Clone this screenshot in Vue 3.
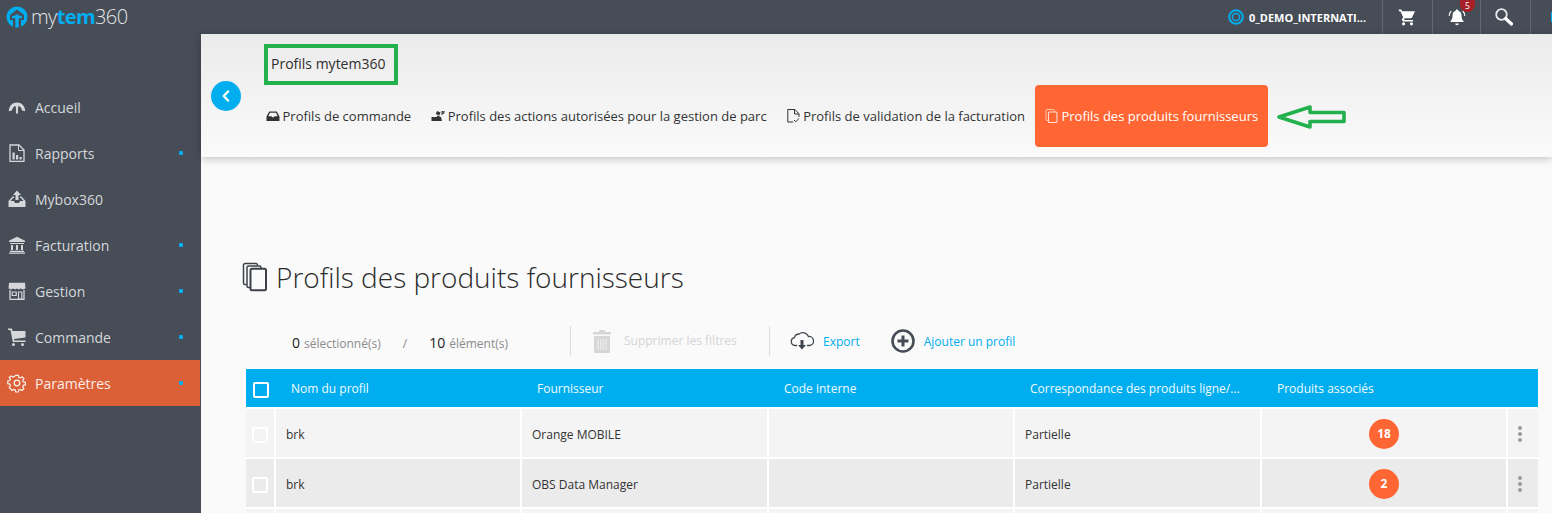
<template>
  <div class="app">
    <header class="topbar">
      <div class="logo">
        <svg class="logo-mark" width="22" height="22" viewBox="0 0 22 22">
          <circle cx="11" cy="11" r="10.500" fill="#00aeef" />
          <path d="M11 3.500L18 9v5h-3v7.500H7V14H4V9z" fill="#464d57" />
          <path d="M9.300 8.500h3.400v13h-3.400zM6 9.800h10v2.400H6z" fill="#00aeef" />
        </svg>
        <span class="logo-text">my<b>tem</b>360</span>
      </div>
      <div class="top-right">
        <div class="account">
          <svg width="16" height="16" viewBox="0 0 16 16">
            <circle cx="8" cy="8" r="6.800" fill="none" stroke="#00aeef" stroke-width="2" />
            <circle cx="8" cy="8" r="3.600" fill="none" stroke="#00aeef" stroke-width="1.500" />
          </svg>
          <span>0_DEMO_INTERNATI...</span>
        </div>
        <div class="top-btn cart">
          <svg width="19" height="19" viewBox="0 0 24 24" fill="#fff">
            <path d="M7 18a2 2 0 1 0 0 4 2 2 0 0 0 0-4zm10 0a2 2 0 1 0 0 4 2 2 0 0 0 0-4zM1 2v2h2l3.600 7.600-1.400 2.400c-.7 1.300.3 3 1.800 3h12v-2H7.400l1.100-2h7.500c.7 0 1.400-.4 1.700-1L21.500 4H5.200l-.9-2H1z" />
          </svg>
        </div>
        <div class="top-btn bell">
          <svg width="18" height="18" viewBox="0 0 18 18" fill="#fff">
            <path d="M9 1.500c.8 0 1.300.5 1.300 1.200 2.300.6 3.200 2.500 3.200 5 0 3 .8 4.200 2 5.300v1H2.500v-1c1.200-1.100 2-2.300 2-5.300 0-2.500.9-4.400 3.200-5 0-.7.500-1.200 1.300-1.200zM7.200 15.500h3.600c0 1-.8 1.700-1.800 1.700s-1.800-.7-1.800-1.700z" />
            <path d="M3.200 3C1.800 4.500 1.200 6 1.200 8M14.800 3c1.400 1.500 2 3 2 5" fill="none" stroke="#fff" stroke-width="1.100" />
          </svg>
          <span class="bell-count">5</span>
        </div>
        <div class="top-btn search">
          <svg width="20" height="20" viewBox="0 0 20 20">
            <circle cx="7.500" cy="7.500" r="5.300" fill="none" stroke="#e8e8e8" stroke-width="1.800" />
            <path d="M11.500 11.500l6 5.500" stroke="#fff" stroke-width="3.200" stroke-linecap="round" />
          </svg>
        </div>
        <div class="top-btn last"><i class="edge-mark"></i></div>
      </div>
    </header>

    <div class="layout">
      <nav class="sidebar">
        <a v-for="item in menu" :key="item.label" class="nav-item" :class="{ active: item.active }">
          <svg class="nav-icon" width="18" height="18" viewBox="0 0 18 18" v-html="item.icon"></svg>
          <span class="nav-label">{{ item.label }}</span>
          <i v-if="item.dot" class="nav-dot"></i>
        </a>
      </nav>

      <main class="main">
        <section class="subheader">
          <button class="back" type="button">
            <svg width="10" height="12" viewBox="0 0 10 12">
              <path d="M7 1.500L2.800 6 7 10.500" fill="none" stroke="#fff" stroke-width="2.400" stroke-linecap="round" stroke-linejoin="round" />
            </svg>
          </button>
          <div class="sub-col">
            <h2 class="sub-title">Profils mytem360</h2>
            <div class="tabs">
              <a v-for="tab in tabs" :key="tab.label" class="tab" :class="{ active: tab.active }">
                <svg width="14" height="14" viewBox="0 0 14 14" v-html="tab.icon"></svg>
                <span>{{ tab.label }}</span>
              </a>
            </div>
          </div>
          <i class="mark-box"></i>
          <svg class="mark-arrow" width="72" height="27" viewBox="0 0 72 27">
            <path d="M3 13L34 3v5.500h34v9H34V23z" fill="none" stroke="#22b14c" stroke-width="3.600" stroke-linejoin="round" />
          </svg>
        </section>

        <section class="content">
          <h1 class="page-title">
            <svg width="26" height="30" viewBox="0 0 26 30" fill="none" stroke="#3c4248" stroke-width="1.500">
              <rect x="8.500" y="6.750" width="15.500" height="21.500" rx="1.500" stroke-width="2" />
              <path d="M8 25.500H6.500A1.500 1.500 0 0 1 5 24V5.500A1.500 1.500 0 0 1 6.500 4H17.500a1.500 1.500 0 0 1 1.500 1.500V6.500" />
              <path d="M4.500 22.500H3A1.500 1.500 0 0 1 1.500 21V3A1.500 1.500 0 0 1 3 1.500H14a1.500 1.500 0 0 1 1.500 1.500V3.500" />
            </svg>
            <span>Profils des produits fournisseurs</span>
          </h1>

          <div class="toolbar">
            <div class="counts">
              <b>0</b><span class="count-label">sélectionné(s)</span>
              <span class="count-sep">/</span>
              <b>10</b><span class="count-label">élément(s)</span>
            </div>
            <div class="tool clear">
              <svg width="18" height="24" viewBox="0 0 18 24" fill="#d6d6d6">
                <path d="M6.500 1h5l.7 2H18v2.500H0V3h5.800zM1 7h16v16a1 1 0 0 1-1 1H2a1 1 0 0 1-1-1z" />
                <path d="M5 10v11M7.700 10v11M10.300 10v11M13 10v11" stroke="#f2f2f2" stroke-width="1" />
              </svg>
              <span>Supprimer les filtres</span>
            </div>
            <div class="tool export">
              <svg width="24" height="20" viewBox="0 0 24 20" fill="none" stroke="#3f464e" stroke-width="1.300">
                <path d="M7 14.500H5a4 4 0 0 1-.6-7.900A5 5 0 0 1 9 3a6 6 0 0 1 9.500 2.500 4.500 4.500 0 0 1 1 9H17" />
                <path d="M10.500 9h3v5H16l-4 4.500L8 14h2.500z" fill="#3f464e" stroke="none" />
              </svg>
              <span>Export</span>
            </div>
            <div class="tool add">
              <svg width="24" height="24" viewBox="0 0 24 24">
                <circle cx="12" cy="12" r="10.500" fill="none" stroke="#464d57" stroke-width="2.600" />
                <path d="M12 6.500v11M6.500 12h11" stroke="#464d57" stroke-width="3" />
              </svg>
              <span>Ajouter un profil</span>
            </div>
          </div>

          <div class="table">
            <div class="thead">
              <div class="th check-cell"><i class="check head"></i></div>
              <div v-for="col in columns" :key="col" class="th">{{ col }}</div>
              <div class="th"></div>
            </div>
            <div v-for="(row, i) in rows" :key="i" class="row">
              <div class="td check-cell"><i v-if="row.name" class="check"></i></div>
              <div class="td">{{ row.name }}</div>
              <div class="td">{{ row.supplier }}</div>
              <div class="td">{{ row.code }}</div>
              <div class="td">{{ row.match }}</div>
              <div class="td center"><span v-if="row.count" class="count">{{ row.count }}</span></div>
              <div class="td"><span v-if="row.name" class="dots"><i></i><i></i><i></i></span></div>
            </div>
          </div>
        </section>
      </main>
    </div>
  </div>
</template>

<script setup>
const stroke = 'fill="none" stroke="currentColor"'

const menu = [
  {
    label: 'Accueil',
    icon: '<path d="M.8 13.200C1 7.800 4.500 4.500 9 4.500s8 3.300 8.200 8.700l-3.200-.7C13.600 10 12.300 8.600 10.300 8.100L9.900 12.500a1.200 1.200 0 1 1-1.800 0L7.700 8.100C5.700 8.600 4.400 10 4 12.500z" fill="currentColor"/><path d="M8 13h2v2.400H8z" fill="currentColor"/>',
  },
  {
    label: 'Rapports',
    dot: true,
    icon: `<path d="M2 1h9l5 5v11.300H2z" ${stroke} stroke-width="1.300"/><path d="M10.500 1v5.500H16" ${stroke}/><path d="M4.500 8.500h2.200v7H4.500zM8 11h2.200v4.500H8zM11.500 13h2.200v2.500h-2.200z" fill="currentColor"/>`,
  },
  {
    label: 'Mybox360',
    icon: '<path d="M9 0.500L13 5h-2.500v5h-3V5H5zM4.500 6.500h1.500v1.500H5L2.500 11H6l1 2h4l1-2h3.500L13 8h-1V6.500h1.500L17.500 11v6H.5v-6z" fill="currentColor"/>',
  },
  {
    label: 'Facturation',
    dot: true,
    icon: '<path d="M9 .8L17 4.800V6H1V4.800zM2 7h14v1H2zM3 9h2v5H3zM8 9h2v5H8zM13 9h2v5h-2zM2 14.800h14V16H2zM1 16.500h16V17.800H1z" fill="currentColor"/>',
  },
  {
    label: 'Gestion',
    dot: true,
    icon: `<path d="M1 .800h16l.5 5.700-2.700 1-2-1-2 1-1.800-1-1.800 1-2-1-2 1-2.700-1z" fill="currentColor"/><path d="M2 8v9.300h14V8" ${stroke} stroke-width="1.300"/><path d="M4.200 10h4v3.500h-4zM10.500 10h3.300v7h-3.300z" ${stroke} stroke-width="1.200"/>`,
  },
  {
    label: 'Commande',
    dot: true,
    icon: '<path d="M0 .500h3.800l.8 2.500H17.500v6.500l-11.500 1.500.3 1.500h11.200v1.500H4.800L2.500 2H0z" fill="currentColor"/><circle cx="5.500" cy="16.500" r="1.500" fill="currentColor"/><circle cx="14.500" cy="16.500" r="1.500" fill="currentColor"/>',
  },
  {
    label: 'Paramètres',
    dot: true,
    active: true,
    icon: `<path d="M7.500 1h3l.5 2.300 1.700.7 2-1.300 2.100 2.100-1.300 2 .7 1.700 2.300.5v3l-2.300.5-.7 1.700 1.300 2-2.100 2.100-2-1.300-1.700.7-.5 2.300h-3l-.5-2.300-1.700-.7-2 1.300L.2 14.700l1.300-2-.7-1.700L-1.500 10.500v-3l2.300-.5.700-1.700-1.300-2L2.300 1.700l2 1.300L6 2.300z" transform="translate(1.100 .4) scale(.88)" ${stroke} stroke-width="1.400"/><circle cx="9" cy="9" r="2.800" ${stroke} stroke-width="1.300"/>`,
  },
]

const tabs = [
  {
    label: 'Profils de commande',
    icon: '<path d="M3.200 2.500h7.600L13.500 7.500v4.500H.5V7.500zM4 3.800L2.300 7.200h3.200l.6 1.100h1.800l.6-1.100h3.200L10 3.800z" fill="currentColor" fill-rule="evenodd"/>',
  },
  {
    label: 'Profils des actions autorisées pour la gestion de parc',
    icon: '<path d="M.5 8h5l1-1.500 3.500 1.500 1 4H.5zM6 2l3.500 1.500-1.200 3-3.500-1.500zM10.500 2H12l-.5 4h-1zM12.500 2h1.300L13 5h-1z" fill="currentColor"/>',
  },
  {
    label: 'Profils de validation de la facturation',
    icon: `<path d="M6 13H.8V.5h7l4.200 4.200V8" ${stroke}/><path d="M7.500.5v4.500H12M7 11l1.800 1.800 3.200-3.400" ${stroke}/>`,
  },
  {
    label: 'Profils des produits fournisseurs',
    active: true,
    icon: `<rect x="3.500" y="3" width="8.500" height="10.500" rx="1" ${stroke} stroke-width="1.100" stroke-opacity=".8"/><path d="M3 11.500H2a1 1 0 0 1-1-1V1.500a1 1 0 0 1 1-1h6.500a1 1 0 0 1 1 1v1" ${stroke} stroke-opacity=".6"/>`,
  },
]

const columns = ['Nom du profil', 'Fournisseur', 'Code interne', 'Correspondance des produits ligne/...', 'Produits associés']

const rows = [
  { name: 'brk', supplier: 'Orange MOBILE', code: '', match: 'Partielle', count: 18 },
  { name: 'brk', supplier: 'OBS Data Manager', code: '', match: 'Partielle', count: 2 },
  { name: '', supplier: '', code: '', match: '', count: 0 },
]
</script>

<style>
html,
body {
  margin: 0;
  overflow: hidden;
  background: #fafafa;
}
</style>

<style scoped>
.app {
  display: flex;
  flex-direction: column;
  width: 1552px;
  height: 513px;
  overflow: hidden;
  font-family: 'Open Sans', 'Liberation Sans', sans-serif;
  font-size: 13px;
  color: #3a3a3a;
}

.topbar {
  display: flex;
  flex: none;
  align-items: stretch;
  justify-content: space-between;
  height: 34px;
  background: #464d57;
}

.logo {
  display: flex;
  align-items: center;
  gap: 3px;
  padding-left: 6px;
}

.logo-text {
  font-size: 20px;
  font-weight: 300;
  letter-spacing: -0.6px;
  color: #e4e6e8;
  line-height: 34px;
}

.logo-text b {
  font-weight: 700;
  color: #00aeef;
}

.top-right {
  display: flex;
  align-items: stretch;
}

.account {
  display: flex;
  align-items: center;
  gap: 5px;
  width: 154px;
  font-size: 11px;
  font-weight: 700;
  color: #fff;
}

.top-btn {
  position: relative;
  display: flex;
  align-items: center;
  justify-content: center;
  width: 50px;
  border-left: 1px solid #626973;
  box-sizing: border-box;
}

.top-btn.bell {
  width: 48px;
}

.top-btn.search svg {
  margin-left: -3px;
}

.top-btn.last {
  width: 22px;
  justify-content: flex-end;
}

.edge-mark {
  width: 1px;
  height: 10px;
  background: #00aeef;
}

.bell-count {
  position: absolute;
  top: 0;
  left: 27px;
  width: 15px;
  height: 12px;
  border-radius: 0 0 8px 8px;
  background: #a81f27;
  color: #fff;
  font-size: 8.5px;
  line-height: 11px;
  text-align: center;
}

.layout {
  display: flex;
  flex: 1;
  min-height: 0;
}

.sidebar {
  flex: none;
  box-sizing: border-box;
  width: 201px;
  padding-top: 50px;
  background: #464d57;
}

.nav-item {
  display: flex;
  align-items: center;
  width: 200px;
  height: 46px;
  padding-left: 8px;
  box-sizing: border-box;
  color: #d5d7da;
  font-size: 14px;
}

.nav-item.active {
  background: #db6038;
  color: #fbeee9;
}

.nav-icon {
  flex: none;
  overflow: visible;
}

.nav-label {
  margin-left: 9px;
  flex: 1;
}

.nav-dot {
  width: 4px;
  height: 4px;
  margin-right: 17px;
  border-radius: 1px;
  background: #00aeef;
}

.main {
  flex: 1;
  min-width: 0;
  background: #fafafa;
}

.subheader {
  position: relative;
  z-index: 1;
  display: flex;
  align-items: flex-start;
  height: 123px;
  padding-left: 10px;
  box-sizing: border-box;
  background: linear-gradient(#ebebeb, #fafafa);
  box-shadow: 0 2px 8px rgba(0, 0, 0, 0.22);
}

.back {
  flex: none;
  width: 30px;
  height: 30px;
  margin-top: 47px;
  padding: 0;
  border: 0;
  border-radius: 50%;
  background: #00aeef;
  display: flex;
  align-items: center;
  justify-content: center;
}

.sub-col {
  margin-left: 15px;
}

.sub-title {
  margin: 20px 0 0 15px;
  height: 31px;
  font-size: 14px;
  font-weight: 400;
  line-height: 20px;
  color: #2e2e2e;
}

.tabs {
  display: flex;
  align-items: center;
}

.tab {
  display: flex;
  align-items: center;
  gap: 2.5px;
  height: 62px;
  padding: 0 10px;
  font-size: 13px;
  color: #333;
  border-radius: 4px;
}

.tab.active {
  background: #ff6633;
  color: #fff;
}

.mark-box {
  position: absolute;
  left: 63px;
  top: 10px;
  width: 134px;
  height: 41px;
  border: 4px solid #22b14c;
  box-sizing: border-box;
}

.mark-arrow {
  position: absolute;
  left: 1075px;
  top: 70px;
}

.content {
  padding: 100px 14px 0 45px;
}

.page-title {
  display: flex;
  align-items: center;
  gap: 8px;
  height: 40px;
  margin: 0 0 0 -4px;
  font-size: 28px;
  font-weight: 300;
  color: #2b2b2b;
}

.toolbar {
  display: flex;
  align-items: center;
  height: 30px;
  margin-top: 29px;
}

.counts {
  display: flex;
  align-items: baseline;
  width: 324px;
  padding: 3px 0 0 46px;
  box-sizing: border-box;
  font-size: 12px;
  color: #8b8b8b;
}

.counts b {
  font-size: 14px;
  font-weight: 400;
  color: #222;
}

.count-label {
  margin-left: 4px;
}

.count-sep {
  margin: 0 22px 0 22px;
}

.tool {
  display: flex;
  align-items: center;
  height: 30px;
  font-size: 12px;
  color: #00aeef;
}

.tool.clear {
  gap: 13px;
  width: 200px;
  padding-left: 22px;
  box-sizing: border-box;
  border-left: 1px solid #dcdcdc;
  border-right: 1px solid #dcdcdc;
  color: #d4d4d4;
}

.tool.clear span {
  margin-top: -2px;
}

.tool.export {
  gap: 9px;
  margin-left: 20px;
}

.tool.add {
  gap: 9px;
  margin-left: 31px;
}

.table {
  margin-top: 13px;
  background: #fff;
}

.thead,
.row {
  display: grid;
  grid-template-columns: 28px 244px 245px 244px 245px 244px 30px;
  column-gap: 2px;
}

.thead {
  height: 38px;
  background: #00aeef;
  margin-bottom: 2px;
}

.th {
  padding: 1px 0 0 15px;
  line-height: 38px;
  font-size: 12px;
  color: #f2fbfe;
  white-space: nowrap;
}

.th.check-cell {
  padding: 2px 0 0;
}

.row {
  height: 48px;
  margin-bottom: 2px;
}

.td {
  display: flex;
  align-items: center;
  padding: 2px 0 0 10px;
  box-sizing: border-box;
  font-size: 12px;
  color: #333;
  background: #f4f4f4;
}

.row:nth-child(odd) .td {
  background: #ebebeb;
}

.td.center {
  justify-content: center;
  padding-left: 0;
}

.td.check-cell {
  justify-content: center;
  padding: 4px 0 0;
}

.check-cell {
  display: flex;
  align-items: center;
  justify-content: center;
}

.check {
  width: 16px;
  height: 16px;
  box-sizing: border-box;
  border: 2px solid #fff;
  border-radius: 2px;
}

.check.head {
  margin-left: 2px;
}

.count {
  width: 30px;
  height: 30px;
  border-radius: 50%;
  background: #ff6633;
  color: #fff;
  font-size: 12px;
  font-weight: 700;
  line-height: 30px;
  text-align: center;
}

.dots {
  display: flex;
  flex-direction: column;
  gap: 2px;
}

.dots i {
  width: 4px;
  height: 4px;
  border-radius: 50%;
  background: #9a9a9a;
}
</style>
